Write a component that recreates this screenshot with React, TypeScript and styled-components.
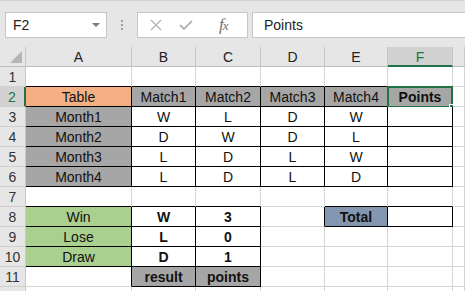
import React from "react";
import styled, { createGlobalStyle } from "styled-components";

const GlobalStyle = createGlobalStyle`
  html, body { margin: 0; padding: 0; background: #ffffff; overflow: hidden; }
  body { font-family: "Liberation Sans", Arial, sans-serif; }
  * { box-sizing: border-box; }
`;

const Window = styled.div`
  width: 465px;
  height: 291px;
  overflow: hidden;
  display: flex;
  flex-direction: column;
  background: #ffffff;
`;

const Toolbar = styled.div`
  height: 47px;
  flex: none;
  background: #e6e6e6;
  border-top: 1px solid #d4d4d4;
  display: flex;
  align-items: flex-start;
  padding: 11px 0 0 5px;
`;

const NameBox = styled.div`
  width: 102px;
  height: 26px;
  background: #ffffff;
  border: 1px solid #c6c6c6;
  display: flex;
  align-items: center;
  justify-content: space-between;
  padding: 0 6px 0 7px;
  font-size: 14px;
  color: #222;
`;

const DropArrow = styled.span`
  width: 0;
  height: 0;
  border-left: 4px solid transparent;
  border-right: 4px solid transparent;
  border-top: 4px solid #7a7a7a;
`;

const Grip = styled.div`
  width: 30px;
  height: 26px;
  display: flex;
  flex-direction: column;
  align-items: center;
  justify-content: center;
  gap: 2px;
`;

const GripDot = styled.span`
  width: 2px;
  height: 2px;
  background: #a0a0a0;
`;

const FxButtons = styled.div`
  width: 111px;
  height: 26px;
  background: #ffffff;
  border: 1px solid #c6c6c6;
  display: flex;
  align-items: center;
  padding-left: 12px;
  gap: 17px;
`;

const FxLabel = styled.span`
  font-family: "Liberation Serif", "Times New Roman", serif;
  font-style: italic;
  font-size: 17px;
  color: #707070;
  margin-left: 9px;
  letter-spacing: -1px;
`;

const FxSmall = styled.span`
  font-size: 13px;
`;

const FormulaInput = styled.div`
  flex: 1;
  margin-left: 4px;
  height: 26px;
  background: #ffffff;
  border: 1px solid #c6c6c6;
  border-right: none;
  display: flex;
  align-items: center;
  padding-left: 11px;
  font-size: 14px;
  color: #222;
`;

const Sheet = styled.div`
  display: grid;
  grid-template-columns: 26px 106px 64px 65px 64px 63px 65px 1fr;
  grid-auto-rows: 20px;
  font-size: 14px;
  color: #111;
`;

const ColHead = styled.div<{ $sel?: boolean }>`
  background: ${(p) => (p.$sel ? "#d2d2d2" : "#e6e6e6")};
  color: ${(p) => (p.$sel ? "#217346" : "#222")};
  border-right: 1px solid #c8c8c8;
  border-bottom: ${(p) => (p.$sel ? "2px solid #217346" : "1px solid #bdbdbd")};
  display: flex;
  align-items: center;
  justify-content: center;
  padding-top: 1px;
`;

const Corner = styled.div`
  background: #e6e6e6;
  border-right: 1px solid #c8c8c8;
  border-bottom: 1px solid #bdbdbd;
  position: relative;
`;

const CornerTri = styled.span`
  position: absolute;
  right: 3px;
  bottom: 3px;
  width: 0;
  height: 0;
  border-left: 12px solid transparent;
  border-bottom: 12px solid #b5b5b5;
`;

const RowHead = styled.div<{ $sel?: boolean }>`
  background: ${(p) => (p.$sel ? "#d2d2d2" : "#e6e6e6")};
  color: ${(p) => (p.$sel ? "#217346" : "#333")};
  border-right: ${(p) => (p.$sel ? "2px solid #217346" : "1px solid #c8c8c8")};
  border-bottom: 1px solid #cfcfcf;
  display: flex;
  align-items: center;
  justify-content: center;
  padding-top: 1px;
`;

const Cell = styled.div<{ $bg?: string; $bold?: boolean; $r?: boolean; $b?: boolean }>`
  position: relative;
  background: ${(p) => p.$bg || "#ffffff"};
  font-weight: ${(p) => (p.$bold ? 700 : 400)};
  border-right: 1px solid ${(p) => (p.$r ? "#000" : "#d4d4d4")};
  border-bottom: 1px solid ${(p) => (p.$b ? "#000" : "#d4d4d4")};
  display: flex;
  align-items: center;
  justify-content: center;
  padding-top: 1px;
  white-space: nowrap;
`;

const Selection = styled.div`
  position: absolute;
  left: -1px;
  top: -1px;
  width: 66px;
  height: 22px;
  border: 2px solid #217346;
  pointer-events: none;
`;

const FillHandle = styled.span`
  position: absolute;
  right: -5px;
  bottom: -5px;
  width: 7px;
  height: 7px;
  background: #217346;
  border: 1px solid #ffffff;
`;

type C = { t?: string; bg?: string; bold?: boolean; r?: boolean; b?: boolean; sel?: boolean };

const GRAY = "#a6a6a6";
const ORANGE = "#f4b084";
const GREEN = "#a9d08e";
const BLUE = "#8497b0";

const box = (t?: string, bg?: string, bold?: boolean): C => ({ t, bg, bold, r: true, b: true });

const rows: C[][] = [
  [{ b: true }, { b: true }, { b: true }, { b: true }, { b: true }, { b: true }, {}],
  [box("Table", ORANGE), box("Match1", GRAY), box("Match2", GRAY), box("Match3", GRAY), box("Match4", GRAY), { ...box("Points", GRAY, true), sel: true }, {}],
  [box("Month1", GRAY), box("W"), box("L"), box("D"), box("W"), box(), {}],
  [box("Month2", GRAY), box("D"), box("W"), box("D"), box("L"), box(), {}],
  [box("Month3", GRAY), box("L"), box("D"), box("L"), box("W"), box(), {}],
  [box("Month4", GRAY), box("L"), box("D"), box("L"), box("D"), box(), {}],
  [{ b: true }, { b: true }, { b: true }, {}, { b: true }, { b: true }, {}],
  [box("Win", GREEN), box("W", undefined, true), box("3", undefined, true), { r: true }, box("Total", BLUE, true), box(), {}],
  [box("Lose", GREEN), box("L", undefined, true), box("0", undefined, true), {}, {}, {}, {}],
  [box("Draw", GREEN), box("D", undefined, true), box("1", undefined, true), {}, {}, {}, {}],
  [{ r: true }, box("result", GRAY, true), box("points", GRAY, true), {}, {}, {}, {}],
  [{}, {}, {}, {}, {}, {}, {}],
];

const cols = ["A", "B", "C", "D", "E", "F", ""];

export default function App() {
  return (
    <Window>
      <GlobalStyle />
      <Toolbar>
        <NameBox>
          <span>F2</span>
          <DropArrow />
        </NameBox>
        <Grip>
          <GripDot />
          <GripDot />
          <GripDot />
        </Grip>
        <FxButtons>
          <svg width="12" height="12" viewBox="0 0 12 12">
            <path d="M1 1 L11 11 M11 1 L1 11" stroke="#b4b4b4" strokeWidth="1.4" fill="none" />
          </svg>
          <svg width="14" height="12" viewBox="0 0 14 12">
            <path d="M1 6 L5 10 L13 2" stroke="#b4b4b4" strokeWidth="1.8" fill="none" />
          </svg>
          <FxLabel>
            f<FxSmall>x</FxSmall>
          </FxLabel>
        </FxButtons>
        <FormulaInput>Points</FormulaInput>
      </Toolbar>
      <Sheet>
        <Corner>
          <CornerTri />
        </Corner>
        {cols.map((c, i) => (
          <ColHead key={i} $sel={c === "F"}>
            {c}
          </ColHead>
        ))}
        {rows.map((row, ri) => (
          <React.Fragment key={ri}>
            <RowHead $sel={ri === 1}>{ri < 11 ? ri + 1 : ""}</RowHead>
            {row.map((c, ci) => (
              <Cell key={ci} $bg={c.bg} $bold={c.bold} $r={c.r} $b={c.b}>
                {c.t}
                {c.sel && (
                  <Selection>
                    <FillHandle />
                  </Selection>
                )}
              </Cell>
            ))}
          </React.Fragment>
        ))}
      </Sheet>
    </Window>
  );
}
